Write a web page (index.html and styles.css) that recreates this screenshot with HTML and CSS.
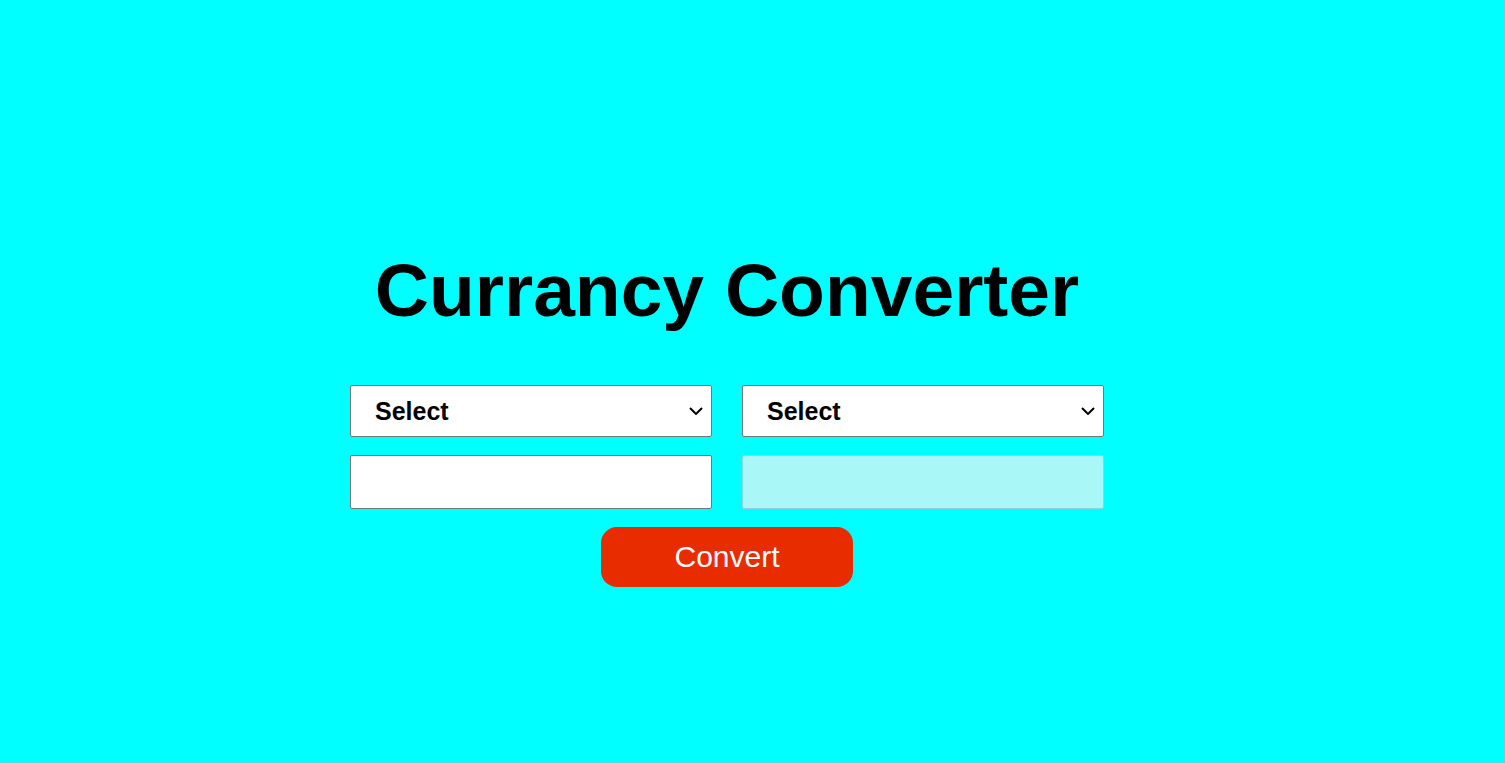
FILE: index.html
```html
<!DOCTYPE html>
<html lang="en">
<head>
<meta charset="utf-8">
<title>Currancy Converter</title>
<link rel="stylesheet" href="styles.css">
</head>
<body>
<main class="page">
  <div class="converter">
    <h1 class="title">Currancy Converter</h1>
    <div class="fields">
      <select class="currency">
        <option>Select</option>
      </select>
      <select class="currency">
        <option>Select</option>
      </select>
      <input class="amount" type="text">
      <input class="amount result" type="text" disabled>
    </div>
    <button class="convert" type="button">Convert</button>
  </div>
</main>
</body>
</html>
```

FILE: styles.css
```css
html, body {
  margin: 0;
  padding: 0;
  background: #00ffff;
  font-family: "Liberation Sans", Arial, sans-serif;
}

.page {
  height: 763px;
  display: flex;
  justify-content: center;
  padding-right: 51px;
  box-sizing: border-box;
}

.converter {
  width: 754px;
  padding-top: 247px;
  display: flex;
  flex-direction: column;
  align-items: center;
}

.title {
  margin: 0 0 52px;
  font-size: 75px;
  font-weight: bold;
  line-height: normal;
  color: #000;
  white-space: nowrap;
}

.fields {
  width: 100%;
  display: grid;
  grid-template-columns: 362px 362px;
  column-gap: 30px;
  row-gap: 18px;
}

.currency {
  -webkit-appearance: none;
  appearance: none;
  height: 52px;
  box-sizing: border-box;
  margin: 0;
  padding: 0 30px 0 24px;
  border: 1px solid #767676;
  border-radius: 2px;
  background-color: #fff;
  background-image: url("data:image/svg+xml,%3Csvg xmlns='http://www.w3.org/2000/svg' width='14' height='8' viewBox='0 0 14 8'%3E%3Cpolyline points='1,1 7,7 13,1' fill='none' stroke='%23000' stroke-width='2'/%3E%3C/svg%3E");
  background-repeat: no-repeat;
  background-position: right 8px center;
  background-size: 14px 8px;
  font-family: "Liberation Sans", Arial, sans-serif;
  font-size: 25px;
  font-weight: bold;
  color: #000;
}

.amount {
  height: 54px;
  box-sizing: border-box;
  margin: 0;
  padding: 0 10px;
  border: 1px solid #767676;
  border-radius: 2px;
  background: #fff;
  font-family: "Liberation Sans", Arial, sans-serif;
  font-size: 24px;
}

.result {
  background: #aaf7f8;
  border-color: #8ad6d8;
}

.convert {
  margin-top: 18px;
  width: 252px;
  height: 60px;
  border: none;
  border-radius: 16px;
  background: #e82c00;
  color: #fff;
  font-family: "Liberation Sans", Arial, sans-serif;
  font-size: 30px;
  padding: 0;
  cursor: pointer;
}
```
